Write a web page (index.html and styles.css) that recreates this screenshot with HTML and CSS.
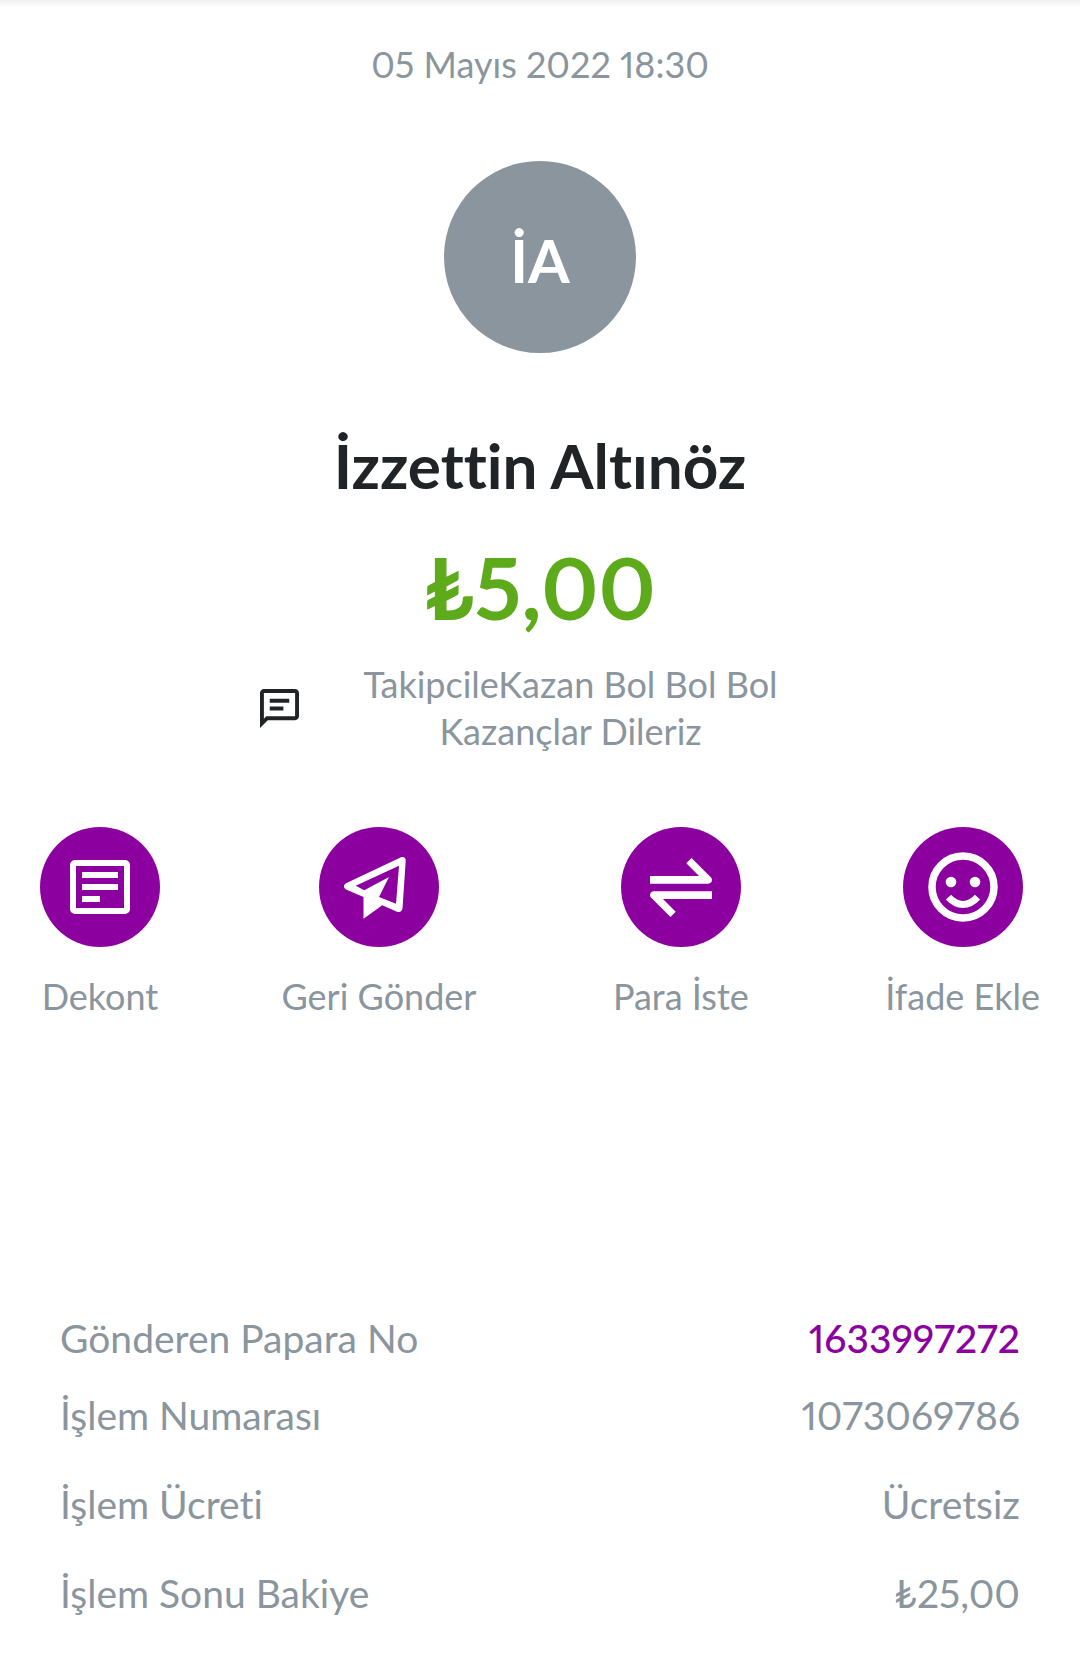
FILE: index.html
```html
<!DOCTYPE html>
<html lang="tr">
<head>
<meta charset="utf-8">
<meta name="viewport" content="width=device-width, initial-scale=1">
<title>İşlem Detayı</title>
<link rel="stylesheet" href="styles.css">
</head>
<body>
<main class="receipt">
  <time class="date" datetime="2022-05-05T18:30">05 Mayıs 2022 18:30</time>
  <div class="avatar">İA</div>
  <h1 class="name">İzzettin Altınöz</h1>
  <p class="amount">₺5,00</p>

  <div class="message">
    <svg class="message-icon" viewBox="2 2 20 20" aria-hidden="true">
      <path d="M4 4h16v12H5.2L4 17.200V4m0-2c-1.100 0-2 .9-2 2v18l4-4h14c1.100 0 2-.9 2-2V4c0-1.100-.9-2-2-2H4z"/>
      <path d="M7 7h10v2H7zM7 11h7v2H7z"/>
    </svg>
    <p class="message-text">TakipcileKazan Bol Bol Bol Kazançlar Dileriz</p>
  </div>

  <div class="actions">
    <button class="action" type="button">
      <svg class="action-icon" viewBox="0 0 120 120" aria-hidden="true">
        <rect x="33" y="36" width="54" height="48" rx="2" fill="none" stroke="#fff" stroke-width="6"/>
        <path fill="#fff" d="M42 45h36v6H42zM42 57h36v6H42zM42 69h18v6H42z"/>
      </svg>
      <span>Dekont</span>
    </button>
    <button class="action" type="button">
      <svg class="action-icon" viewBox="0 0 120 120" aria-hidden="true">
        <path fill="#fff" fill-rule="evenodd" d="M26.500 56.500 82 30.300Q86.800 29.300 86.700 34L83.500 81.500Q82.500 86 78 84.700L63.300 78.300 44.500 91.700V70L27 62.500Q23 59.500 26.500 56.500ZM36.700 58.700 45.300 63.300 70 50 60 70 77 76.700 80 38.700Z"/>
      </svg>
      <span>Geri Gönder</span>
    </button>
    <button class="action" type="button">
      <svg class="action-icon" viewBox="0 0 120 120" aria-hidden="true">
        <path id="half-arrow" fill="#fff" d="M29 49H78L65.300 36.300 70.500 31 90 50.500Q91 51.500 91 52.500Q91 56.500 87 56.700H29Z"/>
        <use href="#half-arrow" transform="rotate(180 60 60.500)"/>
      </svg>
      <span>Para İste</span>
    </button>
    <button class="action" type="button">
      <svg class="action-icon" viewBox="0 0 120 120" aria-hidden="true">
        <circle cx="60" cy="60" r="31" fill="none" stroke="#fff" stroke-width="7.500"/>
        <circle cx="48" cy="55" r="5.300" fill="#fff"/>
        <circle cx="72" cy="55" r="5.300" fill="#fff"/>
        <path d="M45.500 70.200Q52 77.500 60 77.500T74.500 70.200" fill="none" stroke="#fff" stroke-width="7"/>
      </svg>
      <span>İfade Ekle</span>
    </button>
  </div>

  <dl class="details">
    <div class="row row-first"><dt>Gönderen Papara No</dt><dd><a class="account" href="#">1633997272</a></dd></div>
    <div class="row"><dt>İşlem Numarası</dt><dd>1073069786</dd></div>
    <div class="row"><dt>İşlem Ücreti</dt><dd>Ücretsiz</dd></div>
    <div class="row"><dt>İşlem Sonu Bakiye</dt><dd>₺25,00</dd></div>
  </dl>
</main>
</body>
</html>
```
FILE: styles.css
```css
* { box-sizing: border-box; }

body {
  margin: 0;
  background: #fff;
  color: #8a959e;
  font: 36px/48px Lato, "Noto Sans", sans-serif;
  font-variant-ligatures: none;
  font-variant-numeric: proportional-nums;
}

h1, p, dl, dd { margin: 0; }

.receipt {
  display: flex;
  flex-direction: column;
  align-items: center;
  padding-top: 40px;
  background: linear-gradient(#f0f0f0, #fff) top / 100% 8px no-repeat;
}

.avatar {
  display: flex;
  align-items: center;
  justify-content: center;
  width: 192px;
  height: 192px;
  margin-top: 73px;
  padding-top: 6px;
  border-radius: 50%;
  background: #8a959e;
  color: #fff;
  font-size: 60px;
  font-weight: 700;
}

.name {
  margin-top: 72px;
  color: #202427;
  font-size: 62px;
  font-weight: 700;
  line-height: 80px;
}

.amount {
  margin-top: 32px;
  color: #5daa1b;
  font-size: 86px;
  font-weight: 700;
  line-height: 100px;
}

.message {
  display: flex;
  align-items: center;
  gap: 64px;
  margin-top: 24px;
  padding-right: 42px;
}

.message-icon {
  flex: none;
  width: 39px;
  height: 39px;
  fill: #202427;
}

.message-text {
  width: 416px;
  line-height: 47px;
  text-align: center;
}

.actions {
  display: flex;
  justify-content: space-between;
  width: 100%;
  margin-top: 72px;
  padding: 0 40px;
}

.action {
  display: flex;
  flex-direction: column;
  align-items: center;
  gap: 25px;
  padding: 0;
  border: 0;
  background: none;
  color: inherit;
  font: inherit;
  cursor: pointer;
}

.action:first-child { margin-right: -15px; }

.action-icon {
  width: 120px;
  height: 120px;
  border-radius: 50%;
  background: #8c00a0;
}

.details {
  width: 100%;
  margin-top: 274px;
  padding: 0 60px 20px;
  font-size: 39px;
  line-height: 49px;
}

.row {
  display: flex;
  justify-content: space-between;
  padding: 20px 0;
}

.row-first { padding: 20px 0 8px; }

.account {
  color: #8c00a0;
  font-weight: 500;
  text-decoration: none;
}
```
